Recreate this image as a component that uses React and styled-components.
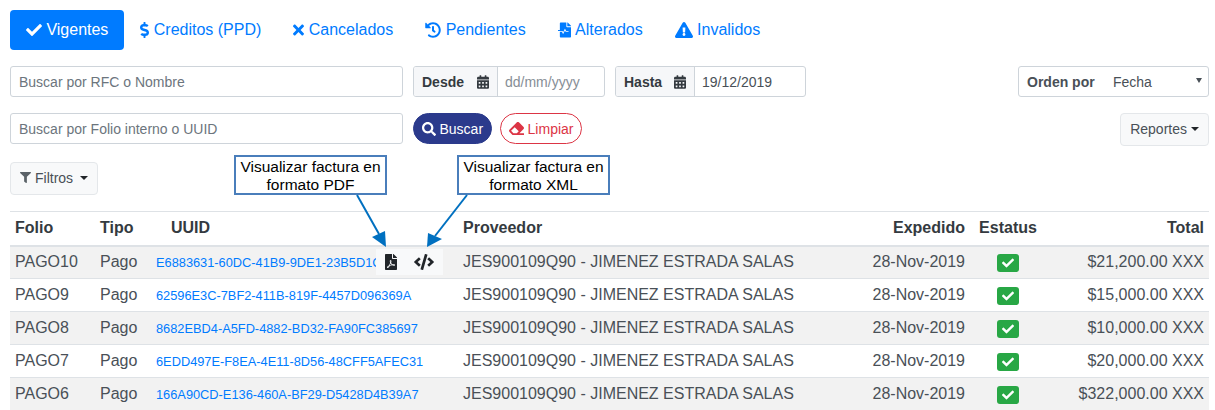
import React from 'react';
import styled, { createGlobalStyle } from 'styled-components';
import {
  FaCheck,
  FaDollarSign,
  FaTimes,
  FaHistory,
  FaFileMedicalAlt,
  FaExclamationTriangle,
  FaCalendarAlt,
  FaSearch,
  FaEraser,
  FaFilter,
  FaFilePdf,
  FaCode,
} from 'react-icons/fa';

const GlobalStyle = createGlobalStyle`
  html, body {
    margin: 0;
    background: #fff;
    color: #212529;
    font-family: "Liberation Sans", Arial, sans-serif;
    font-size: 14px;
    overflow: hidden;
  }
  * { box-sizing: border-box; }
`;

const Page = styled.div`
  position: relative;
  width: 1215px;
  height: 410px;
  padding: 10px 6px 0 10px;
  overflow: hidden;
`;

const Nav = styled.nav`
  display: flex;
  height: 40px;
  margin-bottom: 16px;
`;

const NavItem = styled.a`
  display: flex;
  align-items: center;
  gap: 4.4px;
  height: 40px;
  padding: 0 16px;
  border-radius: 4px;
  font-size: 16px;
  color: ${({ $active }) => ($active ? '#fff' : '#007bff')};
  background: ${({ $active }) => ($active ? '#007bff' : 'transparent')};

  svg {
    width: ${({ $iconWidth }) => $iconWidth}px;
    height: 16px;
  }
`;

const FormRow = styled.div`
  display: flex;
  align-items: flex-start;
  gap: 10px;
  margin-bottom: 16px;
`;

const TextInput = styled.div`
  display: flex;
  align-items: center;
  width: 393px;
  height: 31px;
  padding: 0 8px;
  border: 1px solid #ced4da;
  border-radius: 3px;
  font-size: 14px;
  color: #6c757d;
`;

const DateGroup = styled.div`
  display: flex;
  width: ${({ $width }) => $width}px;
  height: 31px;
  border: 1px solid #ced4da;
  border-radius: 3px;
  overflow: hidden;
`;

const DateLabel = styled.div`
  display: flex;
  align-items: center;
  justify-content: space-between;
  width: ${({ $width }) => $width}px;
  padding: 0 8px;
  background: #f6f7f9;
  border-right: 1px solid #ced4da;
  font-weight: 700;
  font-size: 14px;
  color: #343a40;

  svg {
    width: 12px;
    height: 14px;
  }
`;

const DateValue = styled.div`
  display: flex;
  align-items: center;
  flex: 1;
  padding: 0 7px;
  color: ${({ $empty }) => ($empty ? '#868e96' : '#495057')};
`;

const OrderSelect = styled.div`
  display: flex;
  align-items: center;
  width: 191px;
  height: 31px;
  margin-left: auto;
  padding: 0 6px 0 8px;
  border: 1px solid #ced4da;
  border-radius: 3px;
  color: #495057;
`;

const OrderLabel = styled.span`
  width: 86px;
  font-weight: 700;
`;

const SelectArrow = styled.span`
  width: 0;
  height: 0;
  margin-left: auto;
  margin-top: -2px;
  border-left: 3px solid transparent;
  border-right: 3px solid transparent;
  border-top: 5px solid #495057;
`;

const PillButton = styled.button`
  display: flex;
  align-items: center;
  gap: 3.5px;
  height: 31px;
  padding: 0 8px;
  border: 1px solid ${({ $solid }) => ($solid ? '#2b3a8c' : '#dc3545')};
  border-radius: 16px;
  background: ${({ $solid }) => ($solid ? '#2b3a8c' : '#fff')};
  color: ${({ $solid }) => ($solid ? '#fff' : '#dc3545')};
  font: inherit;
`;

const LimpiarButton = styled(PillButton)`
  margin-left: -2px;
`;

const LightButton = styled.button`
  display: flex;
  align-items: center;
  gap: 4px;
  height: 33px;
  margin-left: ${({ $right }) => ($right ? 'auto' : '0')};
  padding: 0 9px 2px;
  border: 1px solid #e4e7ea;
  border-radius: 4px;
  background: #f8f9fa;
  color: #495057;
  font: inherit;
`;

const Caret = styled.span`
  width: 0;
  height: 0;
  margin-left: ${({ $offset }) => $offset || 0}px;
  border-left: 4px solid transparent;
  border-right: 4px solid transparent;
  border-top: 4px solid #212529;
`;

const FilterRow = styled.div`
  display: flex;
  height: 33px;
  margin-bottom: 16px;
`;

const Table = styled.table`
  width: 1199px;
  table-layout: fixed;
  border-collapse: collapse;
  font-size: 16px;
`;

const HeadCell = styled.th`
  height: 34px;
  padding: 0 5px;
  border-top: 1px solid #dee2e6;
  border-bottom: 2px solid #dee2e6;
  font-weight: 700;
  color: #343a40;
  text-align: ${({ $align }) => $align || 'left'};
  padding-left: ${({ $indent }) => $indent || 5}px;
`;

const Row = styled.tr`
  background: ${({ $striped }) => ($striped ? '#f2f2f2' : '#fff')};
`;

const Cell = styled.td`
  position: relative;
  height: 33px;
  padding: 0 5px;
  border-bottom: 1px solid #dee2e6;
  color: #495057;
  white-space: nowrap;
  overflow: hidden;
  text-align: ${({ $align }) => $align || 'left'};
`;

const UuidLink = styled.a`
  font-size: 12.8px;
  color: #007bff;
`;

const RowActions = styled.div`
  position: absolute;
  top: 2px;
  right: 15px;
  display: flex;
  align-items: center;
  gap: 17px;
  width: 67px;
  height: 26px;
  padding-left: 9px;
  background: #f8f9fa;
  color: #212529;

  svg {
    height: 16px;
  }
  svg:first-child {
    width: 12px;
  }
  svg:last-child {
    width: 20px;
  }
`;

const StatusBadge = styled.span`
  display: flex;
  align-items: center;
  justify-content: center;
  width: 22px;
  height: 18px;
  margin: 2px auto 0;
  border-radius: 3px;
  background: #28a745;
  color: #fff;
`;

const Callout = styled.div`
  position: absolute;
  top: 155px;
  left: ${({ $left }) => $left}px;
  width: 153px;
  height: 40px;
  padding-top: 1px;
  border: 2px solid #4a7ebb;
  background: #fff;
  color: #000;
  font-size: 15.5px;
  line-height: 18px;
  text-align: center;
`;

const ArrowLayer = styled.svg`
  position: absolute;
  top: 0;
  left: 0;
  pointer-events: none;
`;

const rows = [
  ['PAGO10', 'E6883631-60DC-41B9-9DE1-23B5D1C8A7F2', '$21,200.00 XXX'],
  ['PAGO9', '62596E3C-7BF2-411B-819F-4457D096369A', '$15,000.00 XXX'],
  ['PAGO8', '8682EBD4-A5FD-4882-BD32-FA90FC385697', '$10,000.00 XXX'],
  ['PAGO7', '6EDD497E-F8EA-4E11-8D56-48CFF5AFEC31', '$20,000.00 XXX'],
  ['PAGO6', '166A90CD-E136-460A-BF29-D5428D4B39A7', '$322,000.00 XXX'],
];

const App = () => (
  <Page>
    <GlobalStyle />
    <Nav>
      <NavItem $active $iconWidth={16}><FaCheck />Vigentes</NavItem>
      <NavItem $iconWidth={9}><FaDollarSign />Creditos (PPD)</NavItem>
      <NavItem $iconWidth={11}><FaTimes />Cancelados</NavItem>
      <NavItem $iconWidth={16}><FaHistory />Pendientes</NavItem>
      <NavItem $iconWidth={13}><FaFileMedicalAlt />Alterados</NavItem>
      <NavItem $iconWidth={18}><FaExclamationTriangle />Invalidos</NavItem>
    </Nav>

    <FormRow>
      <TextInput>Buscar por RFC o Nombre</TextInput>
      <DateGroup $width={192}>
        <DateLabel $width={84}>Desde<FaCalendarAlt /></DateLabel>
        <DateValue $empty>dd/mm/yyyy</DateValue>
      </DateGroup>
      <DateGroup $width={191}>
        <DateLabel $width={79}>Hasta<FaCalendarAlt /></DateLabel>
        <DateValue>19/12/2019</DateValue>
      </DateGroup>
      <OrderSelect>
        <OrderLabel>Orden por</OrderLabel>
        Fecha
        <SelectArrow />
      </OrderSelect>
    </FormRow>

    <FormRow>
      <TextInput>Buscar por Folio interno o UUID</TextInput>
      <PillButton $solid><FaSearch size={14} />Buscar</PillButton>
      <LimpiarButton><FaEraser size={15} />Limpiar</LimpiarButton>
      <LightButton $right>Reportes<Caret /></LightButton>
    </FormRow>

    <FilterRow>
      <LightButton><FaFilter size={11} color="#5a6268" />Filtros<Caret $offset={3} /></LightButton>
    </FilterRow>

    <Table>
      <colgroup>
        <col style={{ width: 85 }} />
        <col style={{ width: 56 }} />
        <col style={{ width: 307 }} />
        <col style={{ width: 400 }} />
        <col style={{ width: 112 }} />
        <col style={{ width: 76 }} />
        <col style={{ width: 163 }} />
      </colgroup>
      <thead>
        <tr>
          <HeadCell>Folio</HeadCell>
          <HeadCell>Tipo</HeadCell>
          <HeadCell $indent={20}>UUID</HeadCell>
          <HeadCell>Proveedor</HeadCell>
          <HeadCell $align="right">Expedido</HeadCell>
          <HeadCell $align="center">Estatus</HeadCell>
          <HeadCell $align="right">Total</HeadCell>
        </tr>
      </thead>
      <tbody>
        {rows.map(([folio, uuid, total], index) => (
          <Row key={folio} $striped={index % 2 === 0}>
            <Cell>{folio}</Cell>
            <Cell>Pago</Cell>
            <Cell>
              <UuidLink>{uuid}</UuidLink>
              {index === 0 && (
                <RowActions>
                  <FaFilePdf />
                  <FaCode />
                </RowActions>
              )}
            </Cell>
            <Cell>JES900109Q90 - JIMENEZ ESTRADA SALAS</Cell>
            <Cell $align="right">28-Nov-2019</Cell>
            <Cell><StatusBadge><FaCheck size={12} /></StatusBadge></Cell>
            <Cell $align="right">{total}</Cell>
          </Row>
        ))}
      </tbody>
    </Table>

    <Callout $left={234}>Visualizar factura en<br />formato PDF</Callout>
    <Callout $left={457}>Visualizar factura en<br />formato XML</Callout>
    <ArrowLayer width="1215" height="410" viewBox="0 0 1215 410">
      <line x1="357" y1="195" x2="379" y2="234" stroke="#0070c0" strokeWidth="2" />
      <polygon points="386,247 372,237 385,231" fill="#0070c0" />
      <line x1="467" y1="195" x2="435" y2="236" stroke="#0070c0" strokeWidth="2" />
      <polygon points="427,247 428,233 442,239" fill="#0070c0" />
    </ArrowLayer>
  </Page>
);

export default App;
